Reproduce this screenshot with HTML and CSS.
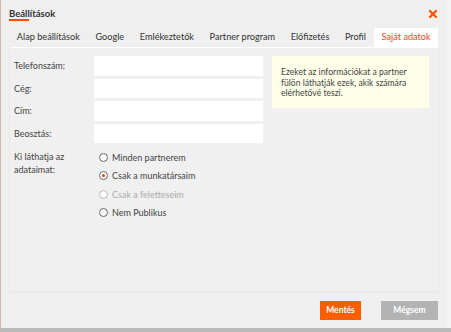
FILE: index.html
```html
<!DOCTYPE html>
<html lang="hu">
<head>
<meta charset="utf-8">
<link rel="stylesheet" href="styles.css">
</head>
<body>
<div class="screen">
  <div class="dialog">
    <div class="header">
      <span class="title">Beállítások</span>
      <span class="close" aria-label="Bezárás">
        <svg width="8" height="8" viewBox="0 0 8 8"><path d="M1 1 L7 7 M7 1 L1 7" stroke="#ff5a0a" stroke-width="2.4" stroke-linecap="square"/></svg>
      </span>
    </div>
    <div class="tabs">
      <span class="tab">Alap beállítások</span>
      <span class="tab">Google</span>
      <span class="tab">Emlékeztetők</span>
      <span class="tab">Partner program</span>
      <span class="tab">Előfizetés</span>
      <span class="tab">Profil</span>
      <span class="tab active">Saját adatok</span>
    </div>
    <div class="panel">
      <div class="form">
        <div class="row"><span class="label">Telefonszám:</span><span class="input"></span></div>
        <div class="row"><span class="label">Cég:</span><span class="input"></span></div>
        <div class="row"><span class="label">Cím:</span><span class="input"></span></div>
        <div class="row"><span class="label">Beosztás:</span><span class="input"></span></div>
        <div class="vis">
          <span class="label vlabel">Ki láthatja az adataimat:</span>
          <div class="radios">
            <div class="radio"><span class="circle"></span>Minden partnerem</div>
            <div class="radio"><span class="circle checked"></span>Csak a munkatársaim</div>
            <div class="radio disabled"><span class="circle"></span>Csak a feletteseim</div>
            <div class="radio"><span class="circle"></span>Nem Publikus</div>
          </div>
        </div>
      </div>
      <div class="info">Ezeket az információkat a partner fülön láthatják ezek, akik számára elérhetővé teszi.</div>
    </div>
    <div class="actions">
      <span class="btn save">Mentés</span>
      <span class="btn cancel">Mégsem</span>
    </div>
  </div>
  <div class="bottom"></div>
</div>
</body>
</html>
```
FILE: styles.css
```css
* { box-sizing: border-box; }
html, body { margin: 0; padding: 0; }
body {
  background: #f4f4f4;
  font-family: Lato, "Open Sans", sans-serif;
  font-size: 9px;
  color: #333;
}
.screen {
  width: 451px;
  height: 332px;
  overflow: hidden;
}
.dialog {
  width: 446px;
  height: 328px;
  background: #efefef;
  border-left: 1px solid #c8bca8;
  display: flex;
  flex-direction: column;
}
.header {
  height: 28px;
  display: flex;
  align-items: flex-start;
  justify-content: space-between;
  padding: 8px 9px 0 8px;
}
.title {
  font-size: 9.5px;
  font-weight: 700;
  color: #333;
  line-height: 11px;
  position: relative;
}
.title::after {
  content: "";
  position: absolute;
  left: 0;
  top: 11px;
  width: 20px;
  height: 1.5px;
  background: #ff4a00;
}
.close {
  display: flex;
  margin-top: 2px;
}
.tabs {
  display: flex;
  padding-left: 8px;
  height: 18.5px;
  font-size: 9.17px;
}
.tab {
  padding: 0 7.8px;
  line-height: 18.5px;
  color: #333;
  white-space: nowrap;
}
.active {
  background: #fff;
  color: #ff3b1a;
}
.panel {
  margin: 0 7px 0 8px;
  height: 245px;
  border-top: 1.5px solid #fff;
  border-left: 1px solid #e7e7e7;
  border-right: 1px solid #e7e7e7;
  border-bottom: 1px solid #e7e7e7;
  background: #f0f0f0;
  display: flex;
  padding: 8.5px 0 0 4px;
}
.form {
  width: 258px;
}
.row {
  display: flex;
  align-items: center;
  height: 19.5px;
  margin-bottom: 3.1px;
}
.label {
  width: 80px;
  color: #444;
}
.input {
  width: 169px;
  height: 19.5px;
  background: #fff;
}
.vis {
  display: flex;
  margin-top: 3px;
}
.vlabel {
  width: 84px;
  line-height: 12.6px;
  padding-top: 5px;
  padding-right: 28px;
}
.radios {
  display: flex;
  flex-direction: column;
  padding-top: 2px;
}
.radio {
  display: flex;
  align-items: center;
  height: 18.3px;
  color: #444;
  white-space: nowrap;
}
.circle {
  width: 9px;
  height: 9px;
  border: 1px solid #6a6a6a;
  border-radius: 50%;
  background: #fafafa;
  margin-left: 1px;
  margin-right: 4px;
  display: flex;
  align-items: center;
  justify-content: center;
}
.checked::after {
  content: "";
  width: 3px;
  height: 3px;
  border-radius: 50%;
  background: #e6401a;
}
.disabled {
  color: #aaa;
}
.disabled .circle {
  border-color: #bbb;
}
.info {
  width: 156.5px;
  height: 52px;
  background: #fefee9;
  padding: 11px 8px 0 9px;
  font-size: 8.6px;
  line-height: 10.5px;
  color: #444;
}
.actions {
  display: flex;
  justify-content: flex-end;
  gap: 20px;
  padding: 9px 8px 0 0;
}
.btn {
  height: 19.5px;
  line-height: 19.5px;
  color: #fff;
  font-weight: 700;
  font-size: 8.5px;
  text-align: center;
}
.save {
  width: 41px;
  background: #ff5e00;
}
.cancel {
  width: 57px;
  background: #b3b3b3;
}
.bottom {
  height: 4px;
  background: #b9b9b9;
}
```
